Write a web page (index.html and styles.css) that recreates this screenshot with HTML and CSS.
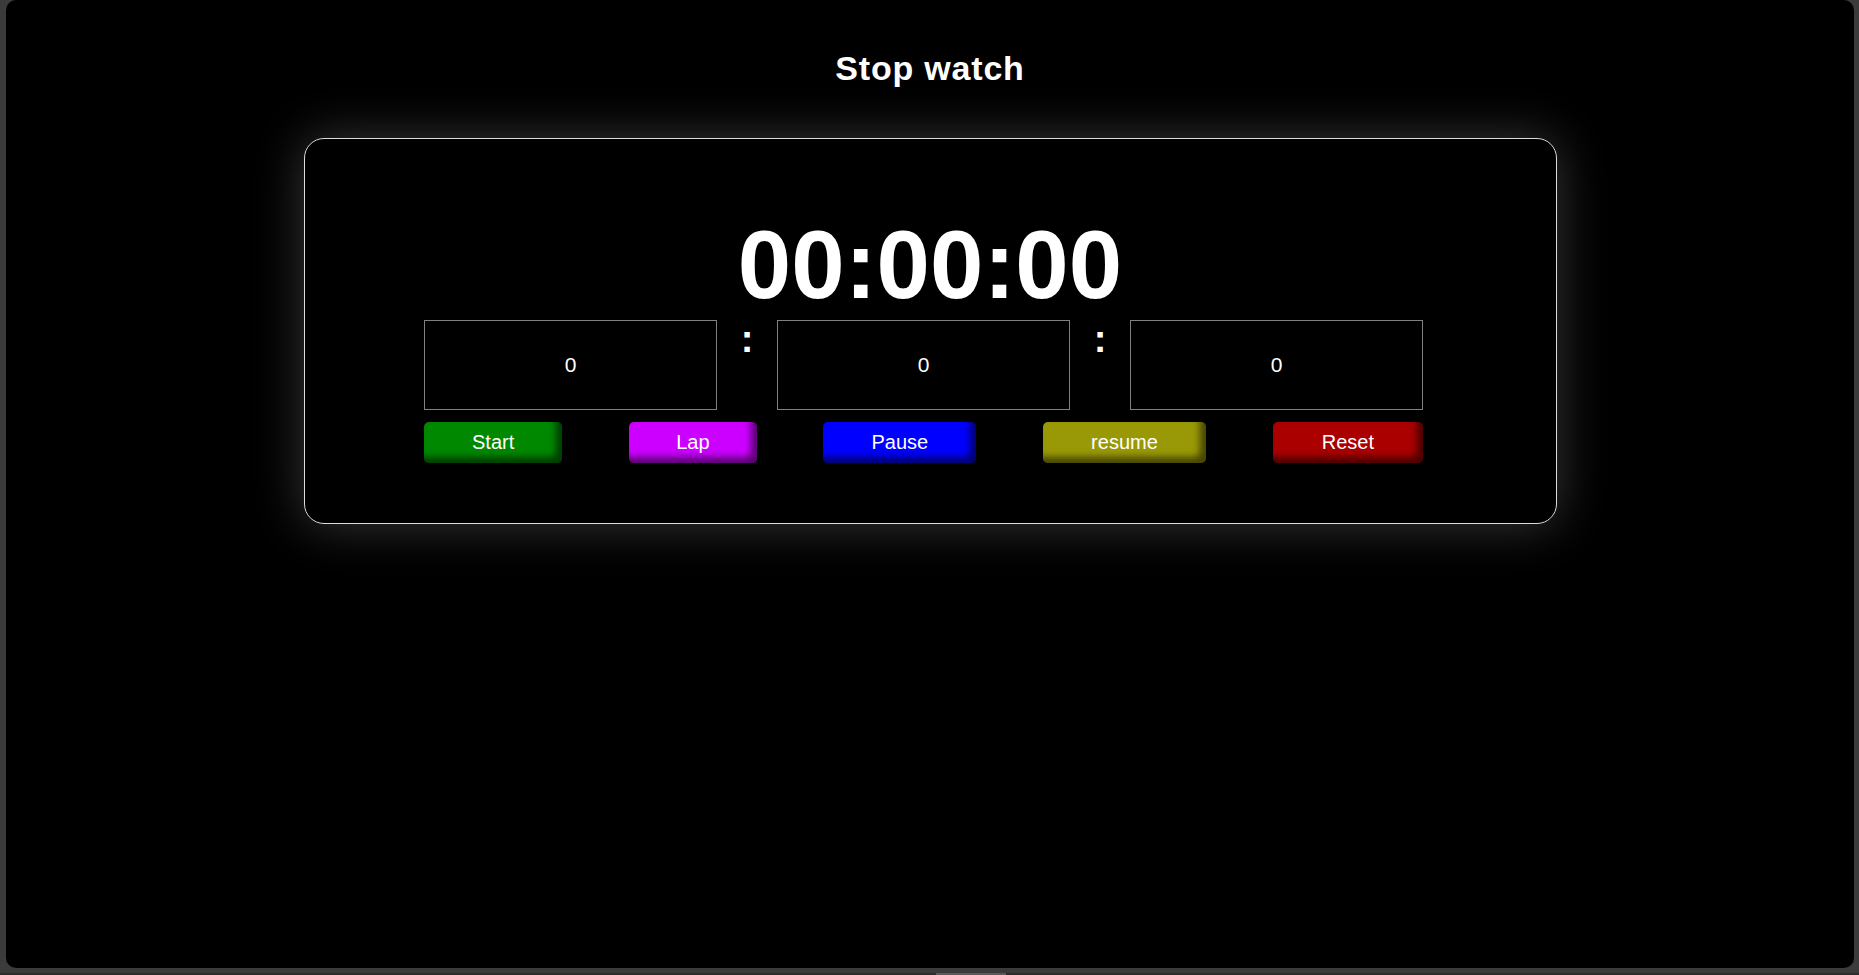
FILE: index.html
```html
<!DOCTYPE html>
<html lang="en">
<head>
<meta charset="utf-8">
<title>Stop watch</title>
<link rel="stylesheet" href="styles.css">
</head>
<body>
  <div class="window">
    <h1 class="title">Stop watch</h1>
    <div class="card">
      <div class="time">00:00:00</div>
      <div class="controls">
        <div class="fields">
          <div class="field">0</div>
          <span class="sep">:</span>
          <div class="field">0</div>
          <span class="sep">:</span>
          <div class="field">0</div>
        </div>
        <div class="buttons">
          <button class="btn btn-start">Start</button>
          <button class="btn btn-lap">Lap</button>
          <button class="btn btn-pause">Pause</button>
          <button class="btn btn-resume">resume</button>
          <button class="btn btn-reset">Reset</button>
        </div>
      </div>
    </div>
  </div>
  <div class="statusbar">
    <div class="track"><div class="thumb"></div></div>
  </div>
</body>
</html>
```

FILE: styles.css
```css
* {
  box-sizing: border-box;
}

html, body {
  margin: 0;
  padding: 0;
}

body {
  background: #3b3b3b;
  font-family: "Liberation Sans", Arial, sans-serif;
  color: #fff;
  height: 975px;
  overflow: hidden;
}

.window {
  margin: 0 5px 0 6px;
  height: 968px;
  background: #000;
  border-radius: 10px;
  overflow: hidden;
  padding-top: 50px;
}

.title {
  margin: 0 0 51px;
  font-size: 34px;
  line-height: 37px;
  font-weight: bold;
  letter-spacing: 0.8px;
  text-align: center;
  color: #fff;
}

.card {
  width: 1253px;
  margin: 0 auto;
  border: 1px solid #dcdcdc;
  border-radius: 20px;
  box-shadow: 0 0 50px rgba(255, 255, 255, 0.22);
  padding: 71px 0 60px;
}

.time {
  font-size: 96px;
  font-weight: bold;
  line-height: 110px;
  text-align: center;
  color: #fff;
}

.controls {
  width: 999px;
  margin-left: 119.5px;
}

.fields {
  display: flex;
  align-items: flex-start;
}

.field {
  width: 293px;
  height: 90px;
  border: 1px solid #808080;
  background: #000;
  display: flex;
  align-items: center;
  justify-content: center;
  font-size: 21px;
  color: #fff;
}

.sep {
  width: 60px;
  text-align: center;
  font-size: 38px;
  font-weight: bold;
  line-height: 1;
  color: #fff;
}

.buttons {
  display: flex;
  justify-content: space-between;
  margin-top: 12px;
}

.btn {
  border: none;
  border-radius: 5px;
  padding: 9px 48px;
  font-family: "Liberation Sans", Arial, sans-serif;
  font-size: 20px;
  line-height: 23px;
  color: #fff;
  box-shadow: inset -6px -6px 7px rgba(0, 0, 0, 0.55);
}

.btn-start { background: #008800; }
.btn-lap { background: #cc00ff; padding: 9px 47px; }
.btn-pause { background: #0000ff; }
.btn-resume { background: #999908; }
.btn-reset { background: #aa0000; padding: 9px 49px; }

.statusbar {
  height: 7px;
  padding-top: 5px;
}

.track {
  height: 2px;
  background: #2c2c2c;
  padding-left: 936px;
}

.thumb {
  width: 70px;
  height: 2px;
  background: #5a5a5a;
}
```
